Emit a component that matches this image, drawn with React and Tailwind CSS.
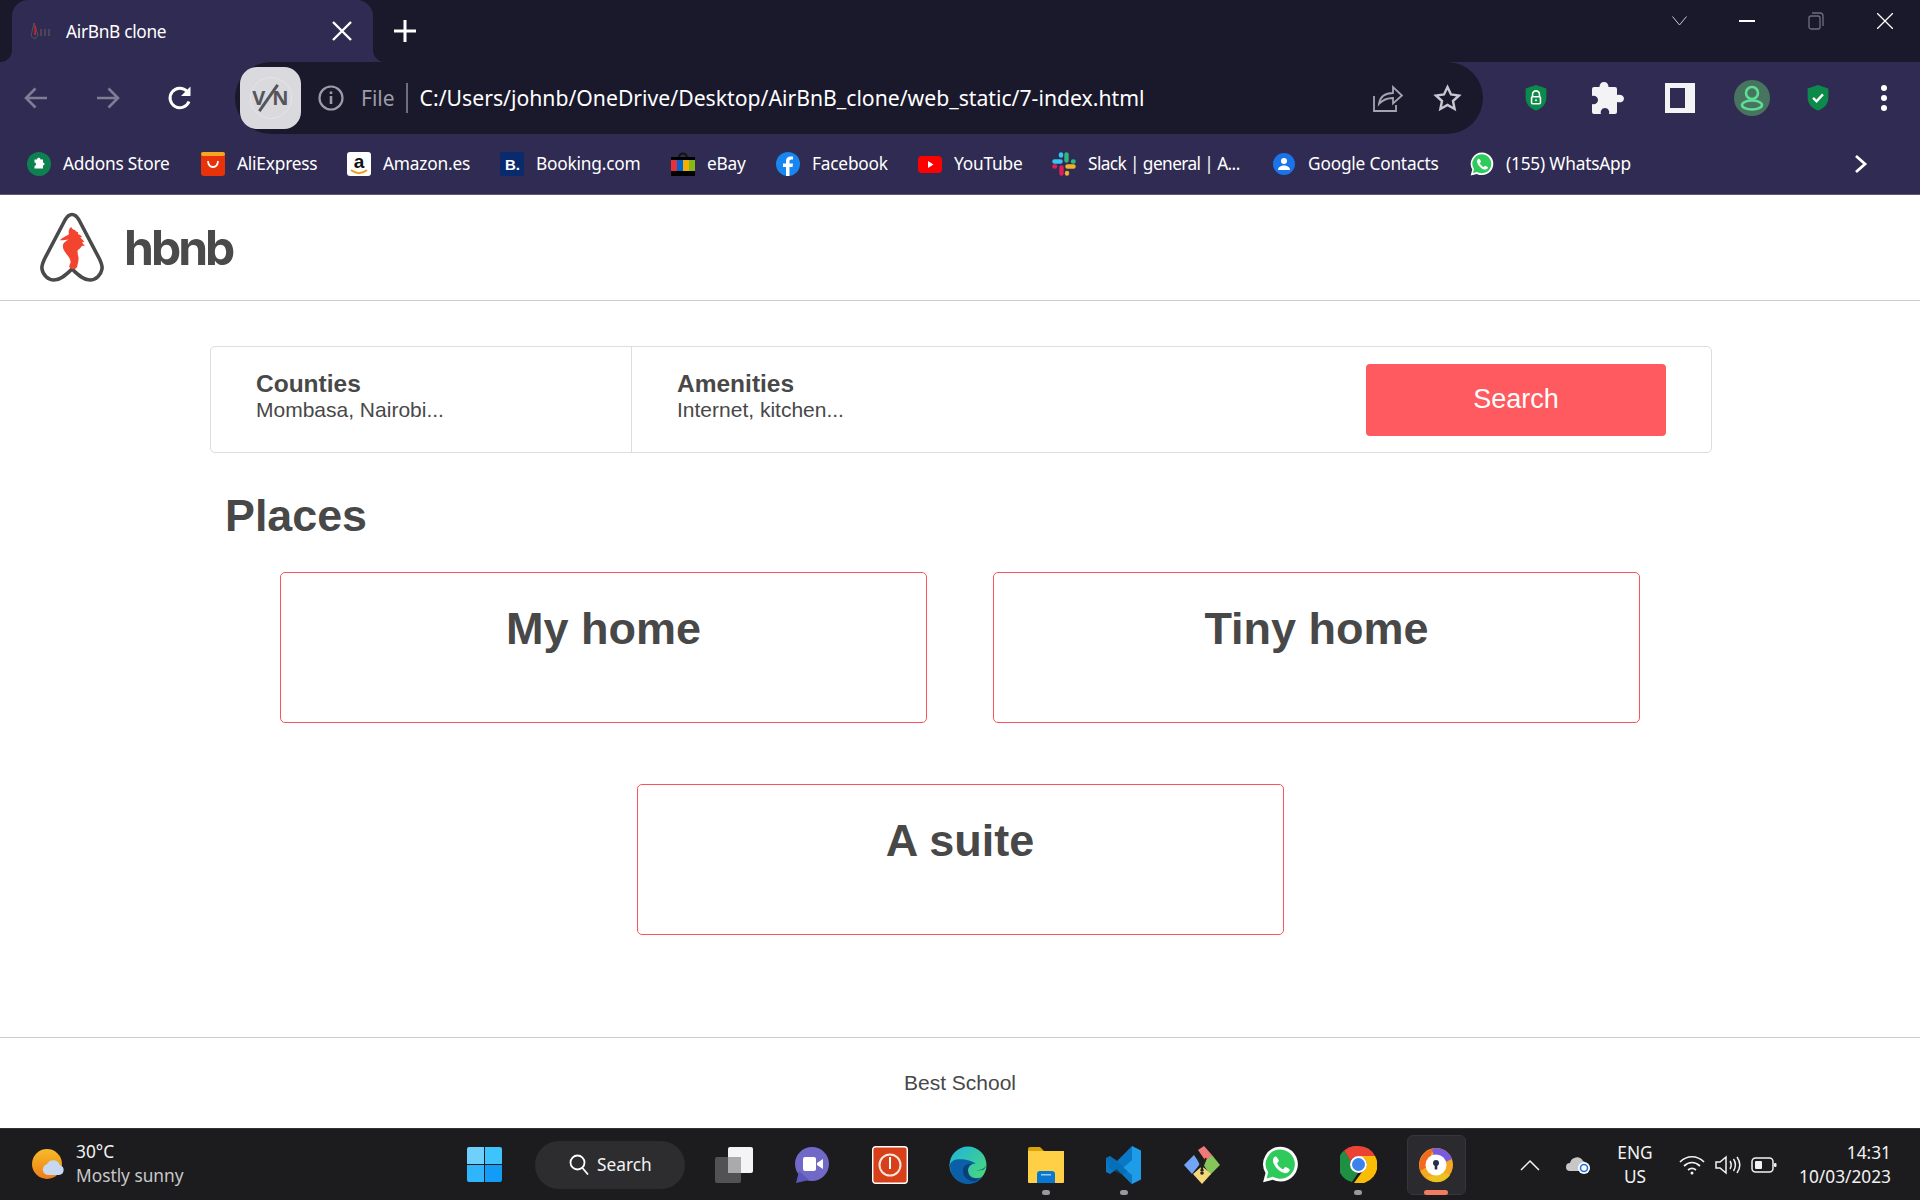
import React from "react";

const Back = ({ c, flip }) => (
  <svg width="26" height="26" viewBox="0 0 26 26" fill="none" stroke={c} strokeWidth="2.6" style={flip ? { transform: "scaleX(-1)" } : undefined}>
    <path d="M24 13H3M12.5 3.5 3 13l9.5 9.5" />
  </svg>
);
const Reload = () => (
  <svg width="28" height="28" viewBox="0 0 28 28" fill="none" stroke="#fff" strokeWidth="3">
    <path d="M23 17.5A9.8 9.8 0 1 1 21 7.2" />
    <path d="M24.5 2.5v9.5h-9.5z" fill="#fff" stroke="none" />
  </svg>
);
const Shield = ({ children, s = 24 }) => (
  <svg width={s} height={s * 1.15} viewBox="0 0 24 28" className="shrink-0">
    <path d="M12 1 22.5 4.5V14C22.5 20 18 25 12 27 6 25 1.5 20 1.5 14V4.5z" fill="#0b8a4a" />
    {children}
  </svg>
);

const Favicon = () => (
  <svg width="24" height="20" viewBox="0 0 24 20" className="shrink-0">
    <path d="M4 2 8 14 5 18 1 15z" fill="none" stroke="#55505f" strokeWidth="1" />
    <path d="M4.5 5c2 2 .5 5 .5 9" stroke="#b42a2a" strokeWidth="2" fill="none" />
    <path d="M11 8v7M15 8v7M19 8v7" stroke="#4a4658" strokeWidth="2" />
  </svg>
);

function WaIcon({ s }) {
  return (
    <svg width={s} height={s} viewBox="0 0 24 24" className="shrink-0">
      <path d="M12 .5A11.300 11.300 0 0 0 2.300 17.500L.7 23.500l6.200-1.600A11.300 11.300 0 1 0 12 .5z" fill="#fff" />
      <path d="M12 2.300a9.500 9.500 0 0 0-8 14.800l-1 3.900 4-1A9.500 9.500 0 1 0 12 2.300z" fill="#2ecb5c" />
      <path d="M8.800 6.800c-.6 0-1.700 1-1.700 2.600 0 3.300 4.700 8.200 8.200 8.200 1.700 0 2.700-1.200 2.700-2 0-.6-2.400-1.900-2.800-1.900-.4 0-1 1.300-1.500 1.300-1 0-3.800-2.700-3.800-3.700 0-.5 1.100-1.100 1.100-1.500 0-.5-1.300-3-2.200-3z" fill="#fff" />
    </svg>
  );
}

const bookmarks = [
  { t: "Addons Store", w: "w-[174px]", i: (
    <svg width="24" height="24" viewBox="0 0 24 24"><circle cx="12" cy="12" r="12" fill="#0d8150" /><path d="M8 8h2.5c0-2.5 3.5-2.5 3.5 0H16.500v3c2 0 2 3 0 3V17H8v-2.500c2-.5 2-3.500 0-3.500z" fill="#fff" transform="translate(-.5 -.5)" /></svg>
  )},
  { t: "AliExpress", w: "w-[146px]", i: (
    <svg width="24" height="24" viewBox="0 0 24 24"><rect width="24" height="24" rx="3" fill="#e8330a" /><rect width="24" height="4" y="0" rx="2" fill="#f5a623" /><path d="M7 9c.5 8 9.500 8 10 0" fill="none" stroke="#fff" strokeWidth="1.800" /></svg>
  )},
  { t: "Amazon.es", w: "w-[153px]", i: (
    <svg width="24" height="24" viewBox="0 0 24 24"><rect width="24" height="24" rx="3" fill="#fff" /><text x="12" y="16" textAnchor="middle" fontSize="19" fontWeight="700" fontFamily="Liberation Sans" fill="#111">a</text><path d="M4 18c5 4 11 4 16 0" fill="none" stroke="#f49b1a" strokeWidth="2" /></svg>
  )},
  { t: "Booking.com", w: "w-[171px]", i: (
    <svg width="24" height="24" viewBox="0 0 24 24"><rect width="24" height="24" rx="3" fill="#0a2a6e" /><text x="5" y="18" fontSize="15" fontWeight="700" fontFamily="Liberation Sans" fill="#fff">B.</text></svg>
  )},
  { t: "eBay", w: "w-[105px]", i: (
    <svg width="24" height="24" viewBox="0 0 24 24"><path d="M8 6c0-6 8-6 8 0" fill="none" stroke="#111" strokeWidth="2" /><rect y="5" width="24" height="19" fill="#000" /><rect y="8" width="6" height="11" fill="#e53238" /><rect x="6" y="8" width="6" height="11" fill="#0064d2" /><rect x="12" y="8" width="6" height="11" fill="#f5af02" /><rect x="18" y="8" width="6" height="11" fill="#86b817" /></svg>
  )},
  { t: "Facebook", w: "w-[142px]", i: (
    <svg width="24" height="24" viewBox="0 0 24 24"><circle cx="12" cy="12" r="12" fill="#1786f0" /><path d="M10 24v-9H7v-3.500h3V9c0-3 1.800-4.600 4.500-4.600l2.500.2v3h-1.700c-1.400 0-1.800.9-1.800 1.800v2.100H17l-.5 3.500h-3v9z" fill="#fff" /></svg>
  )},
  { t: "YouTube", w: "w-[134px]", i: (
    <svg width="24" height="24" viewBox="0 0 24 24"><rect y="4" width="24" height="17" rx="4" fill="#f00" /><path d="M10 9v7l5.500-3.500z" fill="#fff" /></svg>
  )},
  { t: "Slack | general | A...", w: "w-[220px]", n: "tracking-[-0.600px]", i: (
    <svg width="24" height="24" viewBox="0 0 24 24" fill="none" strokeWidth="4.400" strokeLinecap="round"><path d="M2.500 9.500h6" stroke="#36c5f0" /><path d="M9 2.500v1" stroke="#36c5f0" /><path d="M14.500 2.500v6" stroke="#2eb67d" /><path d="M21.500 9.500h-.5" stroke="#2eb67d" /><path d="M21.500 14.500h-6" stroke="#ecb22e" /><path d="M15 21.500v-.5" stroke="#ecb22e" /><path d="M9.500 21.500v-6" stroke="#e01e5a" /><path d="M2.500 14.500h.5" stroke="#e01e5a" /></svg>
  )},
  { t: "Google Contacts", w: "w-[198px]", i: (
    <svg width="24" height="24" viewBox="0 0 24 24"><circle cx="12" cy="12" r="11" fill="#1a73e8" /><circle cx="12" cy="9" r="3" fill="#fff" /><path d="M6 18c0-6 12-6 12 0z" fill="#fff" /></svg>
  )},
  { t: "(155) WhatsApp", w: "w-[220px]", i: <WaIcon s={24} /> },
];

const taskIcons = [
  { i: (
    <svg width="40" height="40" viewBox="0 0 40 40"><rect x="14" y="2" width="25" height="26" rx="2" fill="#f4f4f6" /><rect x="1" y="12" width="26" height="26" rx="2" fill="#5c5c5f" fillOpacity=".85" /><rect x="14" y="12" width="13" height="16" fill="#aaa" /></svg>
  )},
  { i: (
    <svg width="36" height="40" viewBox="0 0 36 40"><circle cx="18" cy="19" r="17" fill="#7069c8" /><path d="M2 38 5 26l10 9z" fill="#5b58bb" /><rect x="9" y="12" width="13" height="14" rx="2" fill="#fff" /><path d="M23 18l6-4v10l-6-4z" fill="#fff" /></svg>
  )},
  { i: (
    <svg width="36" height="38" viewBox="0 0 36 38"><rect x=".7" y=".7" width="34.600" height="36.600" rx="3" fill="#d8401a" stroke="#fff" strokeWidth="1.400" /><circle cx="18" cy="19" r="10.500" fill="none" stroke="#fbe6dc" strokeWidth="2" /><rect x="17" y="11" width="2" height="12" fill="#fff" /></svg>
  )},
  { i: (
    <svg width="38" height="38" viewBox="0 0 38 38"><defs><linearGradient id="eg" x1="0" y1="0" x2="1" y2="1"><stop offset="0" stopColor="#1db4e0" /><stop offset="1" stopColor="#4fdc6c" /></linearGradient></defs><circle cx="19" cy="19" r="18.500" fill="url(#eg)" /><path d="M1 20c0 10 8 18 18 18 6 0 10-2 14-7-7 3-14 0-14-7 0-4 4-7 8-6-6-5-26-8-26 2z" fill="#0b5fa8" /><path d="M14 25c0 6 5 11 13 10l3-3c-7 2-11-1-11-8 0-3 2-5 4-6-5-1-9 2-9 7z" fill="#0a3f78" /><path d="M27 24c4 0 8 0 10-5-1 5-4 6-10 5z" fill="#0a3f78" /></svg>
  )},
  { dot: true, i: (
    <svg width="36" height="36" viewBox="0 0 36 36"><path d="M0 2a2 2 0 0 1 2-2h10l4 4H0z" fill="#d9a405" /><path d="M0 4h36v31a1 1 0 0 1-1 1H1a1 1 0 0 1-1-1z" fill="#ffcf45" /><path d="M9 36V27a3 3 0 0 1 3-3h12a3 3 0 0 1 3 3v9z" fill="#0a78d0" /><rect x="13" y="27" width="10" height="1.500" fill="#8fd0f7" /></svg>
  )},
  { dot: true, i: (
    <svg width="36" height="38" viewBox="0 0 36 38"><path d="M26 0 35 4.500V33.500L26 38 11 23 26 11z" fill="#1f9ce8" /><path d="M26 0 11 15 4 10 0 12v14l4 2 7-5 15 15v-9l-9-7 9-8z" fill="#0a78c4" /><path d="M0 12 4 10 22 25l-5 4-13-6z" fill="#0065a9" fillOpacity=".5" /></svg>
  )},
  { i: (
    <svg width="36" height="38" viewBox="0 0 36 38"><path d="M14 4 20 0l8 9-5 8z" fill="#f07a7a" /><path d="M0 19 10 9l6 9-8 10z" fill="#72a5f5" /><path d="M28 9l8 10-10 10-7-11z" fill="#86c55a" /><path d="M9 28 17 21l1 2 1-2 8 7-9 10z" fill="#f5d77a" /><path d="M14 12l5 13M22 12l-5 13" stroke="#222" strokeWidth="2" /><circle cx="18" cy="27" r="1.800" fill="#222" /></svg>
  )},
  { i: <WaIcon s={37} /> },
  { dot: true, i: (
    <svg width="37" height="37" viewBox="0 0 37 37"><path d="M18.500 0A18.500 18.500 0 0 1 35 10H18.500A8.500 8.500 0 0 0 10.500 15.500L4 4.500A18.500 18.500 0 0 1 18.500 0z" fill="#ea4335" /><path d="M4 4.500 10.800 15.500A8.500 8.500 0 0 0 18 27L12 36A18.500 18.500 0 0 1 4 4.500z" fill="#1f8f43" /><path d="M35 10A18.500 18.500 0 0 1 14 37L22 26A8.500 8.500 0 0 0 24.500 12.500L18.500 10z" fill="#fbbc04" /><circle cx="18.500" cy="18.500" r="7.500" fill="#3b82f0" stroke="#fff" strokeWidth="2" /></svg>
  )},
  { active: true, i: (
    <svg width="34" height="36" viewBox="0 0 34 36"><circle cx="17" cy="18" r="17" fill="#f6a821" /><path d="M17 1a17 17 0 0 1 16 11L20 18 12 2z" fill="#7a5be0" /><path d="M1 24C-2 12 6 3 14 1.500L8 20z" fill="#f26a1f" /><path d="M8 30 27 26l4 2c-4 7-17 11-23 2z" fill="#eec21c" /><circle cx="17" cy="18" r="10.500" fill="#fff" /><circle cx="17" cy="16" r="3" fill="#25304f" /><path d="M15.700 17h2.600v5.500h-2.600z" fill="#25304f" /></svg>
  )},
];

const Seahorse = () => (
  <path
    fill="#f2442f"
    transform="translate(-8 0) scale(1.2 1)"
    d="M33.500 15c.5 1.500 1.500 2.500 3 3 .5 1 2 2 3 2.500l-.5 1.500c1.500.5 3 1.500 3.500 3l-1.500.5c1.500 1.500 2.500 3 3.500 4l-2 1c1 1.500 2 2.500 2.500 3l-2.500.5c-1 1.500-2 3-3.500 4-.5 2 0 4.500.5 7 .5 3-.5 6-1 9.500-.5 1.500-1 2.500-2.500 2.500-2 0-3.500-.5-4-2-.5-2 1-3 1-5 0-3-1.500-5-3.500-8-1.500-2.500-3-5-3-8 0-3 2.500-5 5-6.500-2 .5-4 .7-7.500.7 2-2.500 5-4.200 7.500-5.700 0-2-.5-4 1-6.500z"
  />
);

const Logo = () => (
  <div className="flex items-center">
    <svg width="66" height="72" viewBox="0 0 66 72" className="shrink-0 blur-[0.4px]">
      <path
        d="M33 2.500c3 0 5 2 7 5.500l20 38c2.500 5 3.500 8 3 11-1 6-6 11-12 11-6.500 0-12-5-18-11-6 6-11.500 11-18 11-6 0-11-5-12-11-.5-3 .5-6 3-11L26 8c2-3.500 4-5.500 7-5.500z"
        fill="none"
        stroke="#4a4a4a"
        strokeWidth="3.600"
      />
      <Seahorse />
    </svg>
    <span className="ml-[19px] text-[48px] leading-none font-bold tracking-[-3px] text-[#4a4a4a] blur-[0.4px] font-['Inter',sans-serif] pt-[1px]">hbnb</span>
  </div>
);

const Card = ({ t }) => (
  <div className="w-[647px] h-[151px] border border-[#f7555c] rounded-[5px] flex justify-center pt-[24px]">
    <h2 className="text-[45px] leading-[64px] font-bold text-[#484848]">{t}</h2>
  </div>
);

export default function App() {
  return (
    <div className="w-[1920px] h-[1200px] flex flex-col overflow-hidden bg-white font-['Noto_Sans',sans-serif]">
      {/* tab strip */}
      <div className="h-[62px] shrink-0 bg-[#1a182b] flex items-center text-white">
        <div className="relative ml-[12px] w-[361px] h-full bg-[#302b52] rounded-t-[16px] flex items-center pl-[18px]">
          <div className="absolute left-[-12px] bottom-0 w-[12px] h-[12px] bg-[#302b52]">
            <div className="w-full h-full bg-[#1a182b] rounded-br-[12px]" />
          </div>
          <div className="absolute right-[-12px] bottom-0 w-[12px] h-[12px] bg-[#302b52]">
            <div className="w-full h-full bg-[#1a182b] rounded-bl-[12px]" />
          </div>
          <Favicon />
          <span className="ml-[12px] text-[17.300px] leading-none tracking-[-0.300px] pt-[2px]">AirBnB clone</span>
          <svg width="20" height="20" viewBox="0 0 20 20" stroke="#fff" strokeWidth="2.400" className="ml-auto mr-[21px]"><path d="M1 1l18 18M19 1 1 19" /></svg>
        </div>
        <svg width="22" height="22" viewBox="0 0 22 22" stroke="#fff" strokeWidth="3" className="ml-[21px]"><path d="M11 0v22M0 11h22" /></svg>
        <div className="ml-auto flex items-center pb-[20px]">
          <svg width="15" height="10" viewBox="0 0 15 10" fill="none" stroke="#c9c8d2" strokeWidth="1" className="mr-[52px]"><path d="M.5 .5l7 8.500 7-8.500" /></svg>
          <div className="w-[16px] h-[2px] bg-white mr-[53px]" />
          <svg width="16" height="18" viewBox="0 0 16 18" fill="none" stroke="#6f6d7e" strokeWidth="1.300" className="mr-[53px]"><rect x="1" y="4" width="11" height="13" rx="2" /><path d="M4 1h8a3 3 0 0 1 3 3v10" /></svg>
          <svg width="16" height="16" viewBox="0 0 16 16" stroke="#fff" strokeWidth="1.300" className="mr-[27px]"><path d="M0 0l16 16M16 0 0 16" /></svg>
        </div>
      </div>

      {/* toolbar */}
      <div className="h-[72px] shrink-0 bg-[#302b52] flex items-center pl-[23px]">
        <Back c="#7f7c94" />
        <div className="ml-[46px]"><Back c="#7f7c94" flip /></div>
        <div className="ml-[45px]"><Reload /></div>
        <div className="ml-[41px] w-[1248px] h-full bg-[#1a182b] rounded-[36px] flex items-center pl-[5px] pr-[21px]">
          <div className="relative w-[61px] h-[62px] bg-[#d9d9de] rounded-[17px] flex items-center justify-center text-[20px] font-bold text-[#55555a]">
            <div className="absolute w-[42px] h-[42px] rounded-full border border-[#e6e6e9]" />
            <span>V</span>
            <div className="w-[3px] h-[32px] mx-[2px] bg-[#55555a] rotate-[35deg]" />
            <span>N</span>
          </div>
          <svg width="26" height="26" viewBox="0 0 26 26" fill="none" stroke="#9d9ba8" strokeWidth="2.200" className="ml-[17px]"><circle cx="13" cy="13" r="11.500" /><path d="M13 11v8" strokeWidth="2.600" /><path d="M13 6.500v2.500" strokeWidth="2.600" /></svg>
          <span className="ml-[17px] text-[21px] leading-none text-[#9d9ba8]">File</span>
          <div className="ml-[11px] w-[2px] h-[30px] bg-[#6f6d7e]" />
          <span className="ml-[12px] text-[21.200px] leading-none text-white whitespace-nowrap">C:/Users/johnb/OneDrive/Desktop/AirBnB_clone/web_static/7-index.html</span>
          <svg width="30" height="28" viewBox="0 0 30 28" fill="none" stroke="#a5a3b0" strokeWidth="1.800" className="ml-auto"><path d="M1 12v15h22v-6" /><path d="M6 20c1-7 6-11 14-11V3l9 8.500-9 8V14c-6 0-10 1.500-14 6z" /></svg>
          <svg width="29" height="28" viewBox="0 0 29 28" fill="none" stroke="#c9c8d2" strokeWidth="2.400" className="ml-[30px]"><path d="M14.500 3l3.500 7.500 8 1-6 5.500 1.600 8-7.100-4-7.100 4L9 17 3 11.500l8-1z" /></svg>
        </div>
        <div className="ml-[41px]">
          <Shield s={24}><path d="M8.500 13v-2.500a3.500 3.500 0 0 1 7 0V13" fill="none" stroke="#fff" strokeWidth="1.600" /><rect x="7.500" y="13" width="9" height="7" rx="1" fill="none" stroke="#fff" strokeWidth="1.600" /><circle cx="12" cy="16.500" r="1" fill="#fff" /></Shield>
        </div>
        <svg width="32" height="32" viewBox="0 0 32 32" fill="#f3f3f6" className="ml-[44px]"><path d="M12 0c3 0 4.500 2 4.500 5H23a2 2 0 0 1 2 2v6c3-1 7 0 7 3.500S28 21 25 20v10a2 2 0 0 1-2 2h-6c1-3-1-6-4-6s-5 3-4 6H2a2 2 0 0 1-2-2v-8c3 1 6-1 6-4s-3-5-6-4V7a2 2 0 0 1 2-2h5.500C7.500 2 9 0 12 0z" /></svg>
        <div className="ml-[41px] w-[30px] h-[30px] bg-[#f3f3f6] shrink-0 flex items-center pl-[5px]">
          <div className="w-[15px] h-[20px] bg-[#302b52]" />
        </div>
        <div className="ml-[39px] w-[36px] h-[36px] rounded-full bg-[#47745f] flex items-center justify-center shrink-0">
          <svg width="24" height="26" viewBox="0 0 24 26" fill="none" stroke="#5fdc95" strokeWidth="2.600"><circle cx="12" cy="8" r="6" /><ellipse cx="12" cy="20" rx="10" ry="4.500" /></svg>
        </div>
        <div className="ml-[36px]">
          <Shield s={24}><path d="M7 14l3.500 3.500L17 10.500" fill="none" stroke="#fff" strokeWidth="2.400" /></Shield>
        </div>
        <div className="ml-[51px] flex flex-col gap-[4px] shrink-0">
          <div className="w-[6px] h-[6px] rounded-full bg-white" />
          <div className="w-[6px] h-[6px] rounded-full bg-white" />
          <div className="w-[6px] h-[6px] rounded-full bg-white" />
        </div>
      </div>

      {/* bookmarks */}
      <div className="h-[61px] shrink-0 bg-[#302b52] border-b border-[#5c5a70] flex items-center pl-[27px] pb-[1px] text-[17.300px] text-white">
        {bookmarks.map((b) => (
          <div key={b.t} className={`${b.w} flex items-center gap-[12px] whitespace-nowrap shrink-0`}>
            <span className="shrink-0 w-[24px] h-[24px] flex">{b.i}</span>
            <span className={`leading-none ${b.n || "tracking-[-0.200px]"}`}>{b.t}</span>
          </div>
        ))}
        <svg width="14" height="20" viewBox="0 0 14 20" fill="none" stroke="#fff" strokeWidth="2.800" className="ml-[164px]"><path d="M2 2l9 8-9 8" /></svg>
      </div>

      {/* page */}
      <div className="flex-1 flex flex-col min-h-0 font-['Liberation_Sans',sans-serif] text-[#484848]">
        <header className="h-[106px] shrink-0 border-b border-[#cccccc] flex items-center pl-[39px]">
          <Logo />
        </header>

        <main className="flex-1 min-h-0 flex flex-col">
          <div className="ml-[210px] mt-[45px] w-[1502px] h-[107px] shrink-0 border border-[#dddddd] rounded-[5px] flex items-center">
            <div className="w-[421px] h-full border-r border-[#dddddd] pl-[45px] pt-[22px]">
              <h3 className="text-[24.500px] leading-[29px] font-bold">Counties</h3>
              <p className="text-[21px] leading-[24px]">Mombasa, Nairobi...</p>
            </div>
            <div className="flex-1 h-full pl-[45px] pt-[22px]">
              <h3 className="text-[24.500px] leading-[29px] font-bold">Amenities</h3>
              <p className="text-[21px] leading-[24px]">Internet, kitchen...</p>
            </div>
            <button className="w-[300px] h-[72px] mr-[45px] bg-[#ff5a5f] rounded-[4px] text-white text-[27px]">Search</button>
          </div>
          <h1 className="ml-[225px] mt-[34px] text-[44.800px] leading-[56px] font-bold">Places</h1>
          <div className="mt-[29px] w-[1360px] mx-auto flex flex-wrap justify-center gap-x-[66px] gap-y-[61px]">
            <Card t="My home" />
            <Card t="Tiny home" />
            <Card t="A suite" />
          </div>
        </main>

        <footer className="h-[91px] shrink-0 border-t border-[#cccccc] flex items-center justify-center text-[21px]">Best School</footer>
      </div>

      {/* taskbar */}
      <div className="h-[72px] shrink-0 bg-[#1c1c1f] border-t border-[#333336] flex items-center pl-[32px] text-[#f2f2f2] text-[17.300px]">
        <div className="w-[435px] flex items-center shrink-0">
          <svg width="33" height="32" viewBox="0 0 33 32" className="shrink-0">
            <defs><linearGradient id="sun" x1="0" y1="0" x2="0" y2="1"><stop offset="0" stopColor="#f5bc2a" /><stop offset="1" stopColor="#f07c15" /></linearGradient></defs>
            <circle cx="15" cy="15" r="15" fill="url(#sun)" />
            <path d="M17 26h10a5 5 0 0 0 1-9.800 7 7 0 0 0-13-1A5.500 5.500 0 0 0 17 26z" fill="#c7d8f2" />
          </svg>
          <div className="ml-[11px] flex flex-col leading-[24px] pb-[2px]">
            <span>30°C</span>
            <span className="text-[#c9c9c9]">Mostly sunny</span>
          </div>
        </div>
        <div className="w-[35px] h-[35px] grid grid-cols-2 gap-[1.500px] shrink-0">
          <div className="bg-[#6fd0fb] rounded-tl-[2px]" />
          <div className="bg-[#3fc3fc] rounded-tr-[2px]" />
          <div className="bg-[#2eb5fb] rounded-bl-[2px]" />
          <div className="bg-[#129cf5] rounded-br-[2px]" />
        </div>
        <div className="ml-[33px] w-[150px] h-[48px] rounded-full bg-[#2d2d30] flex items-center pl-[34px] gap-[8px] shrink-0">
          <svg width="20" height="22" viewBox="0 0 20 22" fill="none" stroke="#fff" strokeWidth="1.800"><circle cx="8.500" cy="8.500" r="7" /><path d="M13.500 14l5.500 6.500" /></svg>
          <span>Search</span>
        </div>
        <div className="ml-[10px] flex shrink-0">
          {taskIcons.map((x, k) => (
            <div key={k} className="relative w-[78px] h-[60px] flex items-center justify-center">
              {x.active && <div className="absolute left-[10px] top-0 w-[59px] h-[60px] bg-[#2b2b2f] rounded-[6px] border border-[#36363a]" />}
              <div className="relative flex">{x.i}</div>
              {x.dot && <div className="absolute bottom-[0px] left-[35px] w-[8px] h-[5px] rounded-full bg-[#9a9a9e]" />}
              {x.active && <div className="absolute bottom-[0px] left-[27px] w-[24px] h-[5px] rounded-full bg-[#f37b62]" />}
            </div>
          ))}
        </div>
        <svg width="20" height="12" viewBox="0 0 20 12" fill="none" stroke="#f2f2f2" strokeWidth="1.500" className="ml-[45px] shrink-0"><path d="M1 11l9-9 9 9" /></svg>
        <svg width="26" height="18" viewBox="0 0 26 18" className="ml-[26px] shrink-0"><path d="M4 15a4 4 0 0 1 0-8 7 7 0 0 1 13-2 5 5 0 0 1 3 6l-4 4z" fill="#c7c7c7" /><circle cx="18" cy="12" r="6" fill="#fff" /><circle cx="18" cy="12" r="3.500" fill="none" stroke="#1a73e8" strokeWidth="1.600" /></svg>
        <div className="ml-[23px] w-[40px] flex flex-col items-center leading-[24px] shrink-0">
          <span>ENG</span>
          <span>US</span>
        </div>
        <svg width="26" height="20" viewBox="0 0 26 20" fill="none" stroke="#f2f2f2" strokeWidth="1.700" className="ml-[24px] shrink-0"><path d="M1 7c7-7 17-7 24 0M5 11c5-4.500 11-4.500 16 0M9 15c2.500-2 5.500-2 8 0" /><circle cx="13" cy="18" r="1.500" fill="#f2f2f2" stroke="none" /></svg>
        <svg width="26" height="20" viewBox="0 0 26 20" fill="none" stroke="#f2f2f2" strokeWidth="1.500" className="ml-[10px] shrink-0"><path d="M1 7h4l6-5v16l-6-5H1zM15 6c1.500 2.500 1.500 5.500 0 8M18.500 4c2.500 3.500 2.500 8.500 0 12M22 2c3.500 5 3.500 11 0 16" /></svg>
        <svg width="26" height="16" viewBox="0 0 26 16" fill="none" stroke="#f2f2f2" strokeWidth="1.500" className="ml-[10px] shrink-0"><rect x="1" y="1" width="21" height="14" rx="3.500" /><rect x="4" y="4" width="7" height="8" rx="1" fill="#f2f2f2" stroke="none" /><rect x="23" y="6" width="2.500" height="4" rx="1" fill="#f2f2f2" stroke="none" /></svg>
        <div className="flex-1 flex flex-col items-end pr-[29px] leading-[24px]">
          <span>14:31</span>
          <span>10/03/2023</span>
        </div>
      </div>
    </div>
  );
}
